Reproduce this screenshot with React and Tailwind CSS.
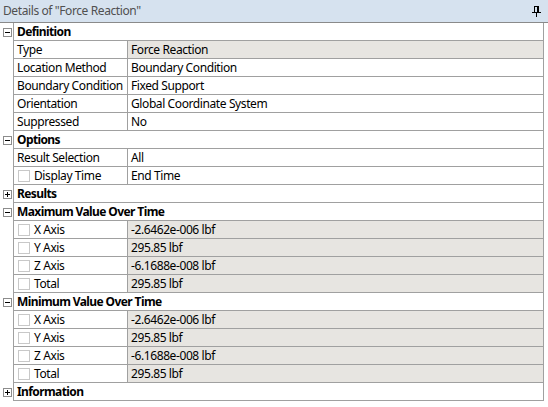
import React from "react";

const rows = [
  { cat: "Definition", open: true },
  { label: "Type", value: "Force Reaction", gray: true },
  { label: "Location Method", value: "Boundary Condition" },
  { label: "Boundary Condition", value: "Fixed Support" },
  { label: "Orientation", value: "Global Coordinate System" },
  { label: "Suppressed", value: "No" },
  { cat: "Options", open: true },
  { label: "Result Selection", value: "All" },
  { label: "Display Time", value: "End Time", check: true },
  { cat: "Results", open: false },
  { cat: "Maximum Value Over Time", open: true },
  { label: "X Axis", value: "-2.6462e-006 lbf", check: true, gray: true },
  { label: "Y Axis", value: "295.85 lbf", check: true, gray: true },
  { label: "Z Axis", value: "-6.1688e-008 lbf", check: true, gray: true },
  { label: "Total", value: "295.85 lbf", check: true, gray: true },
  { cat: "Minimum Value Over Time", open: true },
  { label: "X Axis", value: "-2.6462e-006 lbf", check: true, gray: true },
  { label: "Y Axis", value: "295.85 lbf", check: true, gray: true },
  { label: "Z Axis", value: "-6.1688e-008 lbf", check: true, gray: true },
  { label: "Total", value: "295.85 lbf", check: true, gray: true },
  { cat: "Information", open: false },
];

function Toggle({ open }) {
  return (
    <div className="relative w-[9px] h-[9px] border border-[#8c8c8c] bg-white">
      <div className="absolute left-[1px] top-[3px] w-[5px] h-px bg-black" />
      {!open && <div className="absolute left-[3px] top-[1px] w-px h-[5px] bg-black" />}
    </div>
  );
}

function Pin() {
  return (
    <svg width="9" height="11" viewBox="0 0 9 11" className="block">
      <rect x="2.5" y="0.5" width="4" height="6" fill="none" stroke="#000" />
      <rect x="5" y="0" width="2" height="7" fill="#000" />
      <rect x="0" y="6" width="9" height="1" fill="#000" />
      <rect x="4" y="7" width="1" height="4" fill="#000" />
    </svg>
  );
}

export default function App() {
  return (
    <div
      className="w-[548px] h-[407px] bg-white overflow-hidden text-[12px] tracking-[-0.4px] text-black whitespace-nowrap"
      style={{ fontFamily: '"Segoe UI", "Noto Sans", sans-serif' }}
    >
      <div className="h-[23px] bg-[#d6e2ef] border-b border-[#8a8a8a] flex items-center justify-between pl-[3px] pr-[7px]">
        <span className="text-[#505050] leading-none">Details of "Force Reaction"</span>
        <Pin />
      </div>
      <div className="w-[544px]">
        {rows.map((r, i) => (
          <div key={i} className="flex h-[18px]">
            <div className="w-[13px] shrink-0 flex items-center pl-[3px]">
              {r.cat && <Toggle open={r.open} />}
            </div>
            <div className="flex-1 flex border-l border-r border-b border-[#a0a0a0] leading-none">
              {r.cat ? (
                <div className="flex items-center pl-[3px] pt-px font-bold tracking-[-0.6px]">{r.cat}</div>
              ) : (
                <>
                  <div className="w-[114px] shrink-0 flex items-center pl-[3px] pt-px border-r border-[#a0a0a0]">
                    {r.check && (
                      <div className="w-[12px] h-[12px] border border-[#c8c8c8] bg-white mr-[4px] ml-px -mt-px" />
                    )}
                    {r.label}
                  </div>
                  <div
                    className={
                      "flex-1 flex items-center pl-[3px] pt-px " +
                      (r.gray ? "bg-[#e7e5e1]" : "bg-white")
                    }
                  >
                    {r.value}
                  </div>
                </>
              )}
            </div>
          </div>
        ))}
      </div>
    </div>
  );
}
